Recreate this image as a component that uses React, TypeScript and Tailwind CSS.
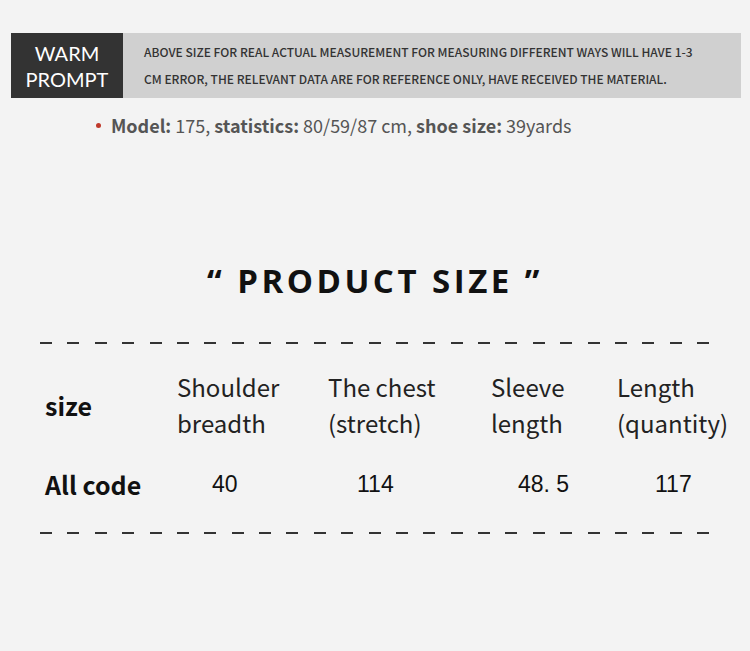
import React from "react";

const Dashes = () => (
  <div className="ml-[40px] w-[669px] flex justify-between">
    {Array.from({ length: 25 }).map((_, i) => (
      <div key={i} className="w-[12px] h-[2px] bg-[#333333]" />
    ))}
  </div>
);

const num = { fontFamily: '"Liberation Sans", sans-serif' };

export default function App() {
  const cjk = { fontFamily: '"Noto Sans CJK SC", "Noto Sans", sans-serif' };
  return (
    <div className="w-[750px] h-[651px] bg-[#f3f3f3] overflow-hidden flex flex-col" style={cjk}>
      <div className="mt-[33px] ml-[11px] w-[730px] h-[65px] flex">
        <div
          className="w-[112px] bg-[#333333] text-white flex flex-col items-center justify-center text-[20px]"
          style={{ fontFamily: 'Lato, "Noto Sans", sans-serif' }}
        >
          <div className="h-[26px] leading-[26px]">WARM</div>
          <div className="h-[26px] leading-[26px]">PROMPT</div>
        </div>
        <div className="flex-1 bg-[#d0d0d0] pl-[21px] pt-[5px] text-[12px] leading-[27px] text-[#333333] font-medium">
          <div>ABOVE SIZE FOR REAL ACTUAL MEASUREMENT FOR MEASURING DIFFERENT WAYS WILL HAVE 1-3</div>
          <div>CM ERROR, THE RELEVANT DATA ARE FOR REFERENCE ONLY, HAVE RECEIVED THE MATERIAL.</div>
        </div>
      </div>

      <div className="mt-[15px] ml-[96px] flex items-center h-[24px] text-[18px] leading-[24px] text-[#555555]">
        <span className="w-[5px] h-[5px] rounded-full bg-[#c0392b] mr-[10px]" />
        <span className="font-bold">Model:</span>
        <span>&nbsp;175,&nbsp;</span>
        <span className="font-bold">statistics:</span>
        <span>&nbsp;80/59/87 cm,&nbsp;</span>
        <span className="font-bold">shoe size:</span>
        <span>&nbsp;39yards</span>
      </div>

      <div
        className="mt-[124px] h-[40px] leading-[40px] text-center text-[33px] font-bold tracking-[3.5px] text-[#111111]"
        style={{ fontFamily: '"Open Sans", sans-serif' }}
      >
        “ PRODUCT SIZE ”
      </div>

      <div className="mt-[41px]">
        <Dashes />
      </div>

      <div className="mt-[25px] ml-[45px] grid grid-cols-[132px_151px_163px_126px_auto] text-[24px] leading-[36px] text-[#222222]">
        <div className="flex items-center font-bold text-[25px] text-[#111111]">size</div>
        <div>Shoulder<br />breadth</div>
        <div>The chest<br />(stretch)</div>
        <div>Sleeve<br />length</div>
        <div>Length<br />(quantity)</div>
      </div>

      <div className="mt-[25px] ml-[45px] grid grid-cols-[132px_151px_163px_126px_auto] h-[36px] leading-[36px] text-[#111111]">
        <div className="font-bold text-[25px]">All code</div>
        <div className="pl-[35px] text-[23px]" style={num}>40</div>
        <div className="pl-[29px] text-[23px]" style={num}>114</div>
        <div className="pl-[27px] text-[23px]" style={num}>48. 5</div>
        <div className="pl-[38px] text-[23px]" style={num}>117</div>
      </div>

      <div className="mt-[30px]">
        <Dashes />
      </div>
    </div>
  );
}
